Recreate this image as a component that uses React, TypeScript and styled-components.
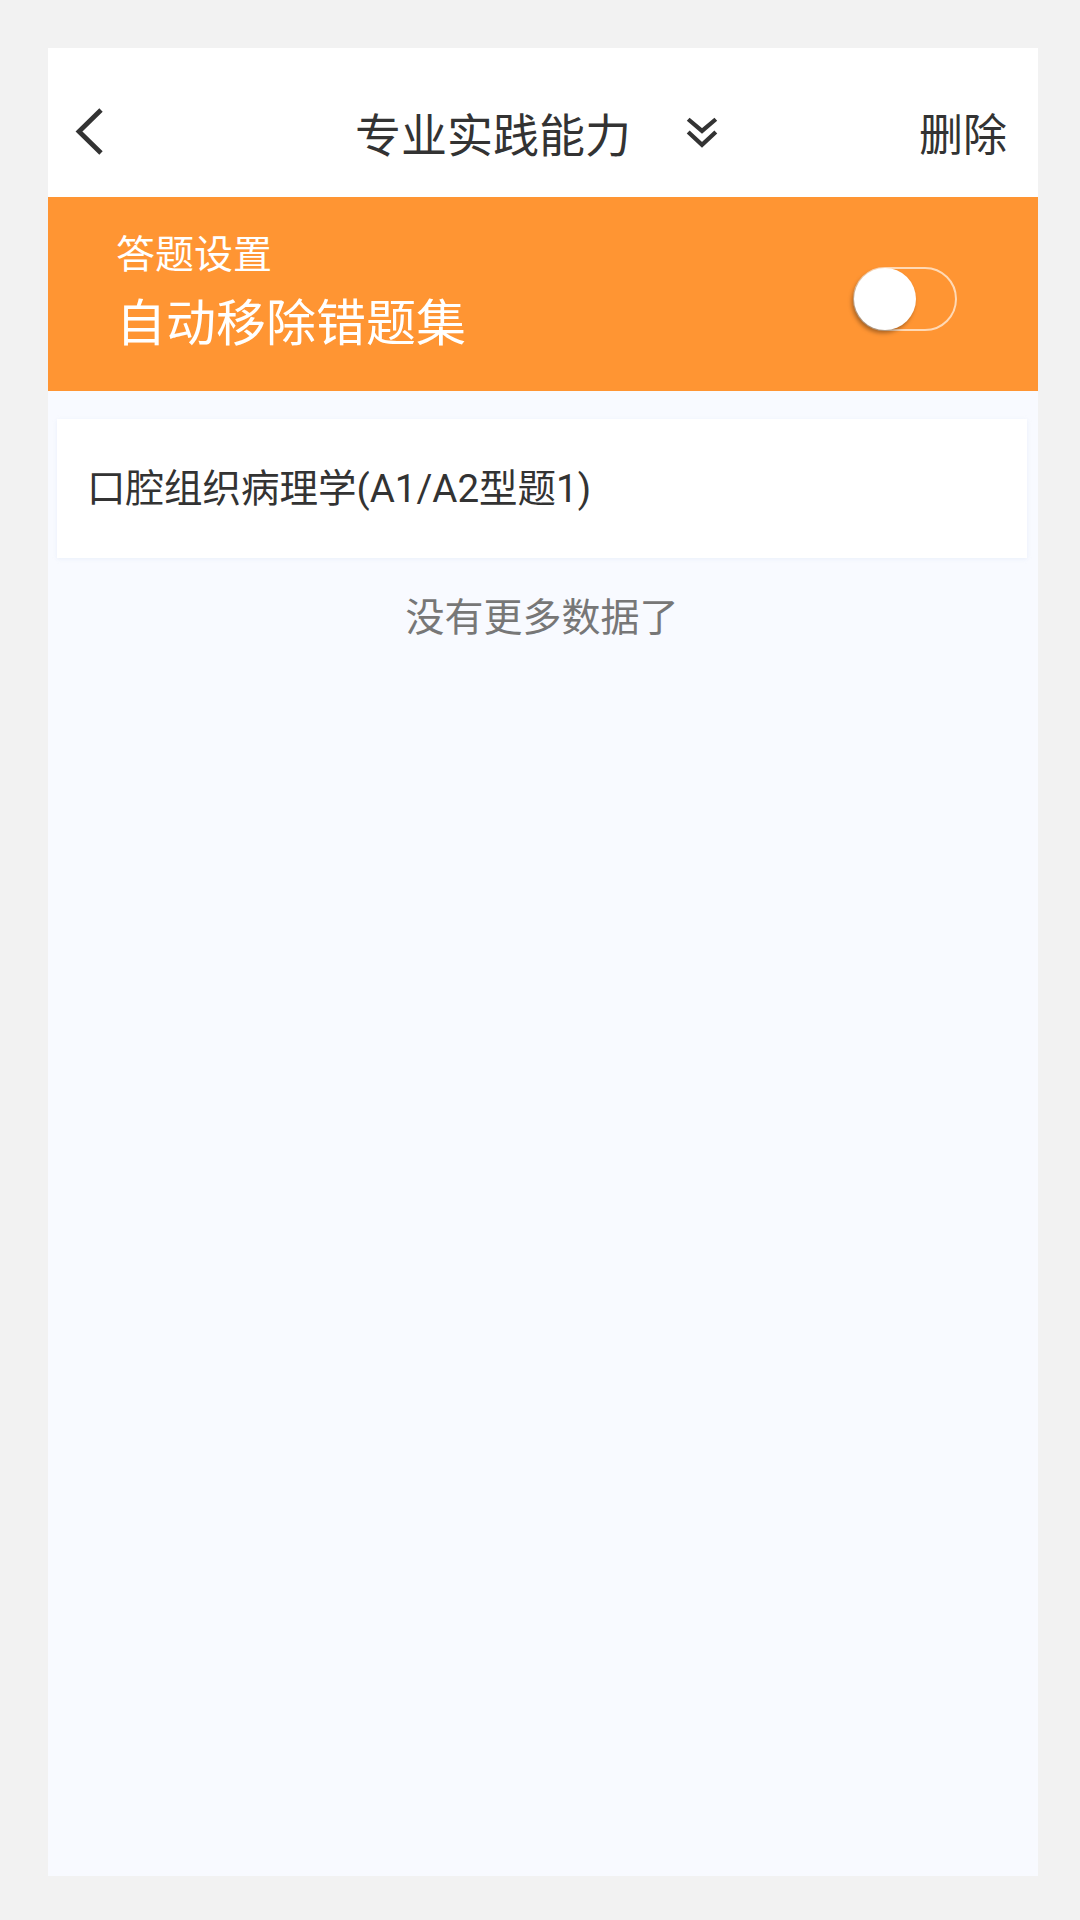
import styled, { createGlobalStyle } from "styled-components";

const GlobalStyle = createGlobalStyle`
  html, body {
    margin: 0;
    padding: 0;
    background: #f2f2f2;
  }
  body {
    font-family: Roboto, "Noto Sans CJK SC", "Noto Sans", sans-serif;
  }
`;

export default function App() {
  return (
    <>
      <GlobalStyle />
      <Page>
        <Panel>
          <Header>
            <BackButton aria-label="返回">
              <svg width="30" height="50" viewBox="0 0 30 50">
                <polyline
                  points="26,3 4,24.5 26,46"
                  fill="none"
                  stroke="#333"
                  strokeWidth="4.8"
                />
              </svg>
            </BackButton>
            <TitleGroup>
              <Title>专业实践能力</Title>
              <svg width="34" height="34" viewBox="0 0 32 32">
                <polyline points="3,4 16,15 29,4" fill="none" stroke="#333" strokeWidth="4" />
                <polyline points="3,16 16,28 29,16" fill="none" stroke="#333" strokeWidth="4" />
              </svg>
            </TitleGroup>
            <Action>删除</Action>
          </Header>

          <Settings>
            <SettingsText>
              <SettingsLabel>答题设置</SettingsLabel>
              <SettingsTitle>自动移除错题集</SettingsTitle>
            </SettingsText>
            <Toggle>
              <Knob />
            </Toggle>
          </Settings>

          <Content>
            <Card>
              <CardTitle>口腔组织病理学(A1/A2型题1)</CardTitle>
            </Card>
            <EndNote>没有更多数据了</EndNote>
          </Content>
        </Panel>
      </Page>
    </>
  );
}

const Page = styled.div`
  padding: 48px 42px 44px 48px;
`;

const Panel = styled.div`
  display: flex;
  flex-direction: column;
  height: 1828px;
  background: #f8faff;
`;

const Header = styled.div`
  display: grid;
  grid-template-columns: 1fr auto 1fr;
  align-items: center;
  height: 130px;
  padding: 19px 31px 0 27px;
  background: #fff;
`;

const BackButton = styled.div`
  justify-self: start;
  display: flex;
  align-items: center;
`;

const TitleGroup = styled.div`
  display: flex;
  align-items: center;
  gap: 54px;
  margin-right: 8px;
`;

const Title = styled.span`
  font-size: 46px;
  color: #333;
`;

const Action = styled.span`
  justify-self: end;
  font-size: 44px;
  color: #333;
`;

const Settings = styled.div`
  display: flex;
  align-items: center;
  justify-content: space-between;
  height: 194px;
  box-sizing: border-box;
  padding: 0 81px 0 68px;
  background: #ff9533;
`;

const SettingsText = styled.div`
  display: flex;
  flex-direction: column;
  gap: 15px;
  padding-bottom: 4px;
`;

const SettingsLabel = styled.span`
  font-size: 39px;
  line-height: 48px;
  color: #fff;
`;

const SettingsTitle = styled.span`
  font-size: 50px;
  line-height: 60px;
  color: #fff;
`;

const Toggle = styled.div`
  display: flex;
  align-items: center;
  width: 104px;
  height: 64px;
  box-sizing: border-box;
  border: 2px solid rgba(255, 240, 225, 0.75);
  border-radius: 32px;
  margin-top: 10px;
`;

const Knob = styled.div`
  width: 62px;
  height: 62px;
  margin-left: -1px;
  border-radius: 50%;
  background: #fff;
  box-shadow: -2px 3px 4px rgba(0, 0, 0, 0.35);
`;

const Content = styled.div`
  flex: 1;
  display: flex;
  flex-direction: column;
  padding: 28px 11px 0 9px;
`;

const Card = styled.div`
  display: flex;
  align-items: center;
  height: 139px;
  box-sizing: border-box;
  padding: 0 30px 8px;
  background: #fff;
  box-shadow: 0 1px 4px rgba(210, 220, 240, 0.35);
`;

const CardTitle = styled.span`
  font-size: 38.5px;
  color: #333;
`;

const EndNote = styled.div`
  margin-top: 28px;
  text-align: center;
  font-size: 39px;
  color: #777;
`;
